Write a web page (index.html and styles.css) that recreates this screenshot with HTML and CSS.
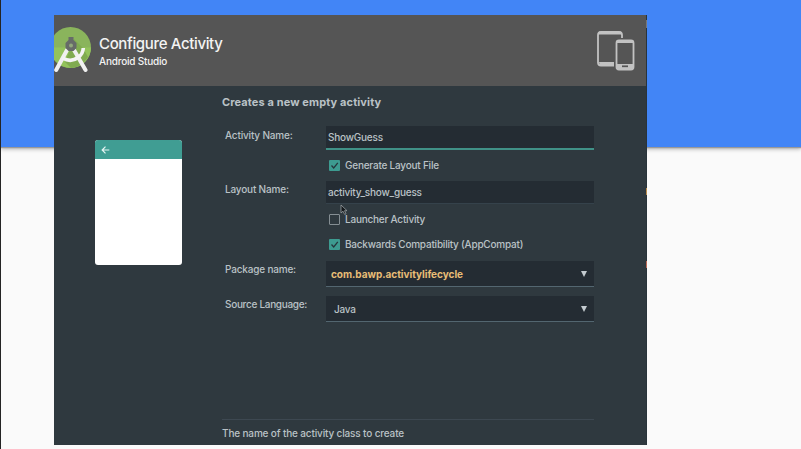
FILE: index.html
```
<!DOCTYPE html>
<html lang="en">
<head>
<meta charset="utf-8">
<title>Configure Activity</title>
<link rel="stylesheet" href="styles.css">
</head>
<body>
<div class="page">
  <div class="banner"></div>
  <main class="dialog">
    <header class="header">
      <svg class="logo" width="38" height="60" viewBox="0 0 38 60">
        <circle cx="16.500" cy="32.500" r="20.500" fill="#8ab45c"/>
        <path d="M0 32.500H37A20.500 20.500 0 0 1 0 44.500Z" fill="#93c35b"/>
        <path d="M20 24L29 33L34 42Q28 52 17 53L11 47Z" fill="#80ab50"/>
        <path d="M13 35L2.200 55M20 35L31.500 55" stroke="#f0f0f0" stroke-width="4" stroke-linecap="round" fill="none"/>
        <path d="M8.500 43Q17 48 24 42.500Q29 39 29.300 33" stroke="#f4f4f4" stroke-width="3.600" fill="none"/>
        <path d="M14.500 22H19.500V25L22.500 28V33L19.500 36H14.500L11.500 33V28L14.500 25Z" fill="#666b68"/>
        <circle cx="17" cy="30.500" r="2" fill="#90a77c"/>
      </svg>
      <div class="titles">
        <h1>Configure Activity</h1>
        <p>Android Studio</p>
      </div>
      <svg class="devices" width="40" height="42" viewBox="0 0 40 42">
        <path d="M18 35.500H5Q2 35.500 2 32.500V5Q2 2 5 2H23Q26 2 26 5V8" fill="none" stroke="#c2c2c2" stroke-width="1.800"/>
        <path d="M3 1.500H25V4.500H3ZM3 32H18V36H4Z" fill="#c2c2c2"/>
        <rect x="20.500" y="10.500" width="17" height="29" rx="2.500" fill="#555" stroke="#c2c2c2" stroke-width="1.800"/>
        <path d="M21 10.500H37V13H21ZM21 34H37V40H21Z" fill="#c2c2c2"/>
        <path d="M26 36.300H32" stroke="#555" stroke-width="1.700"/>
      </svg>
    </header>
    <div class="content">
      <aside class="preview">
        <div class="appbar">
          <svg width="9" height="8" viewBox="0 0 9 8"><path d="M8.300 4H1.200M4.500.7L1.200 4L4.500 7.300" fill="none" stroke="#e6f5f3" stroke-width="1.200"/></svg>
        </div>
      </aside>
      <section class="form">
        <h2>Creates a new empty activity</h2>
        <div class="row name-row">
          <label>Activity Name:</label>
          <div class="field focused">ShowGuess</div>
        </div>
        <div class="check check-layout">
          <span class="box on"><svg width="11" height="11" viewBox="0 0 11 11"><path d="M2.500 5.500L4.700 7.900L8.800 2.800" fill="none" stroke="#26363c" stroke-width="1.300"/></svg></span>
          <span>Generate Layout File</span>
        </div>
        <div class="row layout-row">
          <label>Layout Name:</label>
          <div class="field f-layout">activity_show_guess
            <svg class="cursor" width="8" height="12" viewBox="0 0 8 12"><path d="M1 1V9L3 7.200L4.700 10.500L6 9.800L4.500 6.700H7Z" fill="#15191c" stroke="#a7adb0" stroke-width=".7"/></svg>
          </div>
        </div>
        <div class="check check-launcher">
          <span class="box"></span>
          <span>Launcher Activity</span>
        </div>
        <div class="check check-compat">
          <span class="box on"><svg width="11" height="11" viewBox="0 0 11 11"><path d="M2.500 5.500L4.700 7.900L8.800 2.800" fill="none" stroke="#26363c" stroke-width="1.300"/></svg></span>
          <span>Backwards Compatibility (AppCompat)</span>
        </div>
        <div class="row select-row">
          <label>Package name:</label>
          <div class="field select package"><span>com.bawp.activitylifecycle</span><i class="arrow"></i></div>
        </div>
        <div class="row select-row">
          <label class="l-source">Source Language:</label>
          <div class="field select language"><span>Java</span><i class="arrow"></i></div>
        </div>
        <footer>The name of the activity class to create</footer>
      </section>
    </div>
    <i class="edge edge-top"></i>
    <i class="edge edge-yellow"></i>
    <i class="edge edge-red"></i>
  </main>
</div>
</body>
</html>
```
FILE: styles.css
```
* { box-sizing: border-box; }
body { margin: 0; font-family: Inter, "Liberation Sans", sans-serif; }
h1, h2, p { margin: 0; }
svg { display: block; }
.page {
  position: relative;
  width: 801px;
  height: 449px;
  overflow: hidden;
  padding: 15px 0 0 53px;
  background: #fafafa;
  border-left: 1px solid #242424;
}
.banner {
  position: absolute;
  inset: 0 0 auto 0;
  height: 147px;
  background: #4285f6;
  box-shadow: 0 1px 1px #999, 0 2px 4px #aaa;
}
.dialog {
  position: relative;
  width: 593px;
  height: 430px;
  background: #2f393f;
  border-right: 1px solid #29343b;
  color: #bac2c6;
  font-size: 10px;
}
.header {
  display: flex;
  height: 71px;
  background: #555;
  color: #f3f3f3;
}
.logo { flex: none; }
.titles { flex: 1; padding: 18px 0 0 7px; }
h1 { font-size: 15px; line-height: 21px; font-weight: 500; letter-spacing: -.35px; white-space: nowrap; }
.titles p { font-size: 10px; line-height: 14px; font-weight: 500; letter-spacing: -.2px; }
.devices { margin: 15px 10px 0 0; }
.content { display: flex; height: 359px; }
.preview {
  width: 87px;
  height: 125px;
  margin: 54px 40px 0 41px;
  background: #fff;
  border-radius: 3px;
  overflow: hidden;
}
.appbar { height: 19px; padding: 6px 0 0 6px; background: #409d93; }
.form { display: flex; flex-direction: column; width: 372px; font-weight: 500; letter-spacing: -.22px; white-space: nowrap; }
h2 { margin-top: 9px; height: 15px; font-size: 11px; line-height: 15px; font-weight: 700; letter-spacing: .11px; }
.row { display: grid; grid-template-columns: 104px 268px; }
.row label { padding-left: 3px; height: 16px; line-height: 16px; letter-spacing: -.18px; }
.row .l-source { letter-spacing: -.3px; }
.field { position: relative; height: 25px; padding-left: 2px; line-height: 23px; background: #242c33; border-bottom: 1px solid #35424b; }
.name-row { margin-top: 16px; }
.name-row label { line-height: 18px; }
.focused { height: 24px; border-bottom: 2px solid #409187; }
.check { display: flex; align-items: center; gap: 5px; height: 14px; padding-left: 107px; }
.box { width: 11px; height: 11px; border: 1px solid #858e93; border-radius: 1px; }
.box.on { border: 0; background: #3d9b90; }
.check-layout { margin-top: 8px; }
.layout-row { margin-top: 9px; }
.f-layout { height: 23px; }
.check-launcher { margin-top: 8px; }
.check-compat { margin-top: 11px; }
.select-row { margin-top: 10px; height: 26px; }
.select-row + .select-row { margin-top: 9px; }
.select { display: flex; height: 26px; justify-content: space-between; align-items: center; padding: 1px 7px 0 5px; border-bottom: 1px solid #536670; }
.language { padding-left: 8px; }
.package { color: #e8bd77; font-weight: 700; letter-spacing: -.03px; }
.arrow { width: 6px; height: 6px; background: #c4cbd0; clip-path: polygon(0 0, 100% 0, 50% 100%); }
.cursor { position: absolute; left: 14px; top: 23px; z-index: 1; }
footer { margin-top: auto; height: 26px; padding-top: 6px; line-height: 14px; letter-spacing: -.15px; border-top: 1px solid #3d4851; }
.edge { position: absolute; right: -1px; width: 1px; }
.edge-top { top: 5px; height: 8px; background: #777; }
.edge-yellow { top: 173px; height: 7px; background: #bb8d4c; }
.edge-red { top: 246px; height: 7px; background: #bb6956; }
```
